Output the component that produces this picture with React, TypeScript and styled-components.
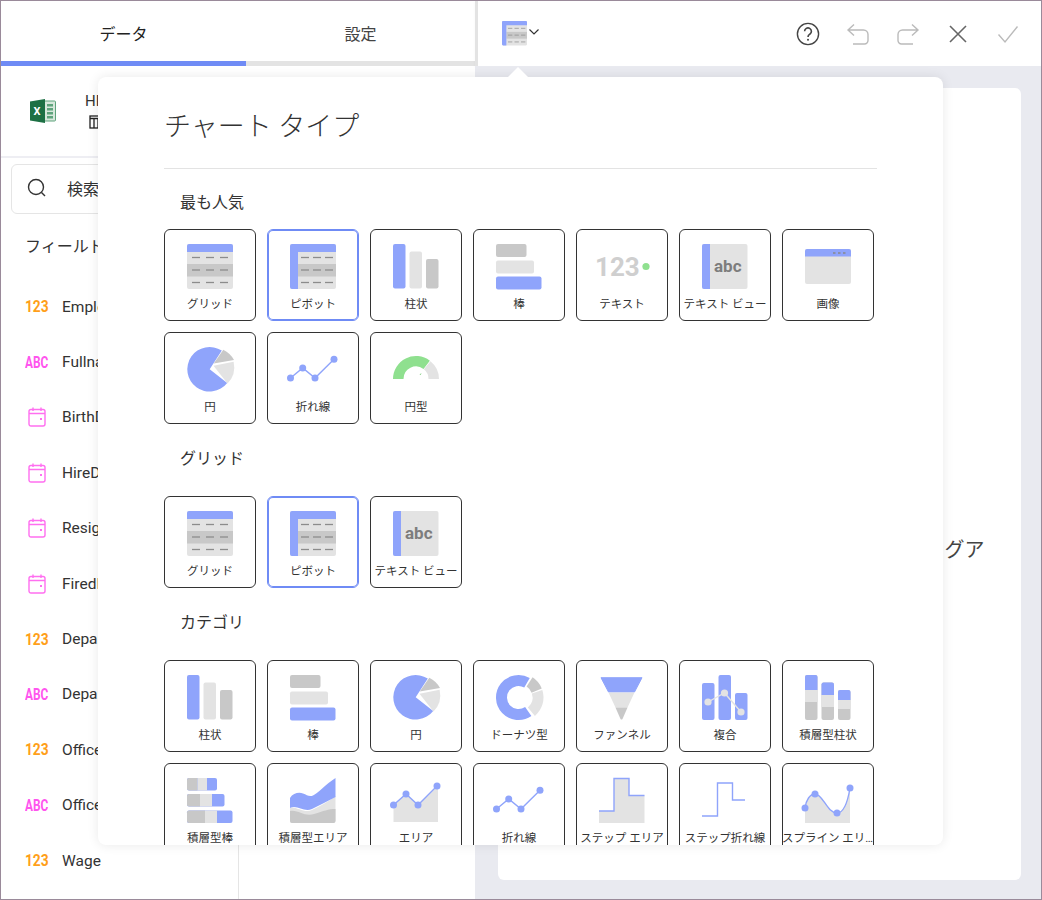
import React from "react";
import styled, { createGlobalStyle } from "styled-components";

const BLUE = "#8fa4fb";
const LIGHT = "#e3e3e3";
const MID = "#c8c8c8";
const DASH = "#8c8c8c";

const GlobalStyle = createGlobalStyle`
  html, body {
    margin: 0;
    padding: 0;
    background: #fff;
    font-family: Roboto, "Noto Sans CJK JP", sans-serif;
    color: #333;
  }
  * {
    box-sizing: border-box;
  }
`;

const polar = (cx: number, cy: number, r: number, deg: number) => {
  const rad = (deg * Math.PI) / 180;
  return `${(cx + r * Math.cos(rad)).toFixed(2)} ${(cy + r * Math.sin(rad)).toFixed(2)}`;
};

// ring segment, angles in degrees clockwise from 3 o'clock
const ring = (cx: number, cy: number, r1: number, r2: number, a0: number, a1: number) => {
  const large = a1 - a0 > 180 ? 1 : 0;
  return `M${polar(cx, cy, r2, a0)} A${r2} ${r2} 0 ${large} 1 ${polar(cx, cy, r2, a1)} L${polar(cx, cy, r1, a1)} A${r1} ${r1} 0 ${large} 0 ${polar(cx, cy, r1, a0)} Z`;
};

const Dashes = ({ x0, step }: { x0: number; step: number }) => (
  <g stroke={DASH} strokeWidth="1.3">
    {[13.5, 26, 38.5].map((y) =>
      [0, 1, 2].map((i) => (
        <line key={`${y}-${i}`} x1={x0 + i * step} x2={x0 + i * step + 8} y1={y} y2={y} />
      ))
    )}
  </g>
);

const GridIcon = () => (
  <>
    <rect x="0" y="0" width="46" height="45" rx="2" fill={LIGHT} />
    <rect x="0" y="20" width="46" height="12.5" fill={MID} />
    <path d="M0 8V2a2 2 0 0 1 2-2h42a2 2 0 0 1 2 2v6z" fill={BLUE} />
    <Dashes x0={5} step={14} />
  </>
);

const PivotIcon = () => (
  <>
    <rect x="0" y="0" width="46" height="45" rx="2" fill={LIGHT} />
    <rect x="8" y="20" width="38" height="12.5" fill={MID} />
    <path d="M0 43V2a2 2 0 0 1 2-2h42a2 2 0 0 1 2 2v6H8v37H2a2 2 0 0 1-2-2z" fill={BLUE} />
    <Dashes x0={11} step={12} />
  </>
);

const ColumnIcon = () => (
  <>
    <rect x="0" y="0" width="12.5" height="44.5" rx="2" fill={BLUE} />
    <rect x="16.5" y="7.5" width="12.5" height="37" rx="2" fill={LIGHT} />
    <rect x="33" y="15" width="12.5" height="29.5" rx="2" fill={MID} />
  </>
);

const BarIcon = () => (
  <>
    <rect x="0" y="0" width="30.5" height="13" rx="2" fill={MID} />
    <rect x="0" y="16.5" width="38" height="13" rx="2" fill={LIGHT} />
    <rect x="0" y="32.5" width="45.5" height="13" rx="2" fill={BLUE} />
  </>
);

const NumberIcon = () => (
  <>
    <text x="-4" y="32" fontFamily="Roboto, sans-serif" fontWeight="700" fontSize="26" fill="#cfcfcf">
      123
    </text>
    <circle cx="47" cy="22.5" r="3.6" fill="#8fe08f" />
  </>
);

const TextViewIcon = () => (
  <>
    <rect x="0" y="0" width="45.5" height="45" rx="2" fill={LIGHT} />
    <path d="M2 0h6v45H2a2 2 0 0 1-2-2V2a2 2 0 0 1 2-2z" fill={BLUE} />
    <text x="12" y="28" fontFamily="Roboto, sans-serif" fontWeight="700" fontSize="17" fill="#7d7d7d">
      abc
    </text>
  </>
);

const ImageIcon = () => (
  <>
    <rect x="0" y="5" width="46" height="35" rx="2" fill={LIGHT} />
    <path d="M0 12.5V7a2 2 0 0 1 2-2h42a2 2 0 0 1 2 2v5.5z" fill={BLUE} />
    <g fill="#8a8fa8">
      <rect x="28" y="8" width="2.5" height="2" />
      <rect x="33" y="8" width="2.5" height="2" />
      <rect x="38" y="8" width="2.5" height="2" />
    </g>
  </>
);

const PieIcon = () => (
  <>
    <path d="M22.7 22.3 L34.8 3.6 A22.3 22.3 0 1 0 40.2 36 Z" fill={BLUE} />
    <path d="M26.7 16.6 L36.3 2.7 A24 24 0 0 1 47 13 Z" fill={MID} />
    <path d="M26.5 18.7 L46.6 14.7 A24 24 0 0 1 40.5 36.6 Z" fill={LIGHT} />
  </>
);

const LinePoints = ({ pts }: { pts: number[][] }) => (
  <>
    <polyline points={pts.map((p) => p.join(",")).join(" ")} fill="none" stroke={BLUE} strokeWidth="1.4" />
    {pts.map((p) => (
      <circle key={p.join()} cx={p[0]} cy={p[1]} r="3.5" fill={BLUE} />
    ))}
  </>
);

const LineIcon = () => (
  <LinePoints
    pts={[
      [0.5, 31],
      [12.7, 21],
      [25, 31],
      [44, 12.3],
    ]}
  />
);

const GaugeIcon = () => (
  <>
    <path d={ring(23, 32, 12.5, 23, 180, 307)} fill="#8fe08f" />
    <path d={ring(23, 32, 12.5, 23, 309, 360)} fill={LIGHT} />
    <path d="M26.5 27.5l2-1.5-.8 2z" fill="#7fcf7f" />
  </>
);

const DonutIcon = () => (
  <>
    <path d={ring(22.5, 22.5, 11.5, 22.5, 55, 300)} fill={BLUE} />
    <path d={ring(23.5, 22.5, 13, 24, 303, 338)} fill={MID} />
    <path d={ring(23.5, 22.5, 13, 24, 342, 410)} fill={LIGHT} />
  </>
);

const FunnelIcon = () => (
  <>
    <path d="M2 2.7H43L35.5 17H9.5z" fill={BLUE} stroke={BLUE} strokeLinejoin="round" />
    <path d="M9.5 17.5H35.5L28.5 32.5H16.5z" fill={LIGHT} />
    <path d="M16.5 32.5H28.5L23.5 44Q22.5 45 21.5 44z" fill={MID} />
  </>
);

const ComboIcon = () => (
  <>
    <rect x="0" y="8" width="12.5" height="37" rx="2" fill={BLUE} />
    <rect x="16.5" y="0" width="12.5" height="45" rx="2" fill={BLUE} />
    <rect x="33" y="18" width="12.5" height="27" rx="2" fill={BLUE} />
    <polyline points="6,27 22.5,18 39,37" fill="none" stroke={LIGHT} strokeWidth="1.4" />
    <circle cx="6" cy="27" r="3.6" fill={LIGHT} />
    <circle cx="22.5" cy="18" r="3.6" fill={LIGHT} />
    <circle cx="39" cy="37" r="3.6" fill={LIGHT} />
  </>
);

const StackedColumnIcon = () => {
  const cols = [
    { x: 0, a: 0, b: 15, c: 27 },
    { x: 16.5, a: 7.5, b: 20, c: 32 },
    { x: 33, a: 15, b: 25, c: 34 },
  ];
  return (
    <>
      {cols.map((c) => (
        <g key={c.x}>
          <rect x={c.x} y={c.a} width="12.5" height={45 - c.a} rx="2" fill={MID} />
          <path d={`M${c.x} ${c.b}V${c.a + 2}a2 2 0 0 1 2-2h8.5a2 2 0 0 1 2 2V${c.b}z`} fill={BLUE} />
          <rect x={c.x} y={c.b} width="12.5" height={c.c - c.b} fill={LIGHT} />
        </g>
      ))}
    </>
  );
};

const StackedBarIcon = () => {
  const rows = [
    { y: 0, m: 10.5, l: 20, e: 30 },
    { y: 16, m: 13, l: 25, e: 37.5 },
    { y: 32.5, m: 18, l: 30, e: 45.5 },
  ];
  return (
    <>
      {rows.map((r) => (
        <g key={r.y}>
          <rect x="0" y={r.y} width={r.e} height="12.5" rx="2" fill={BLUE} />
          <path d={`M${r.m} ${r.y}H2a2 2 0 0 0-2 2v8.5a2 2 0 0 0 2 2H${r.m}z`} fill={MID} />
          <rect x={r.m} y={r.y} width={r.l - r.m} height="12.5" fill={LIGHT} />
        </g>
      ))}
    </>
  );
};

const StackedAreaIcon = () => (
  <>
    <path d="M0 43V30C5 27 14 36 22 32S38 24 45.5 18V43a2 2 0 0 1-2 2H2a2 2 0 0 1-2-2z" fill={LIGHT} />
    <path d="M0 33C8 31 14 39 24 36S38 31 45.5 31V43a2 2 0 0 1-2 2H2a2 2 0 0 1-2-2z" fill={MID} />
    <path d="M0 30V20C3 15 9 14 13 15.5S19 19 23 17.5 36 6 45.5 0V19C38 23 30 27 22 31S7 26 0 30z" fill={BLUE} />
  </>
);

const AreaIcon = () => (
  <>
    <path d="M.5 27L13 16 25 27 45 8V44H.5z" fill={LIGHT} />
    <LinePoints
      pts={[
        [0.5, 27],
        [13, 16],
        [25, 27],
        [44, 8],
      ]}
    />
  </>
);

const StepAreaIcon = () => (
  <>
    <path d="M0 33H15V0H30V17.5H45.5V45H0z" fill={LIGHT} />
    <path d="M0 33H15V.5H30V17.5H45.5" fill="none" stroke={BLUE} strokeWidth="1.4" />
  </>
);

const StepLineIcon = () => (
  <path d="M0 38H15.5V5H30.5V22H43" fill="none" stroke={BLUE} strokeWidth="1.4" />
);

const SplineAreaIcon = () => (
  <>
    <path d="M0 30C1 22 5 16 10 16 18 16 22 35 32 35 39 35 43 22 45 10V45H0z" fill={LIGHT} />
    <path d="M0 30C1 22 5 16 10 16 18 16 22 35 32 35 39 35 43 22 45 10" fill="none" stroke={BLUE} strokeWidth="1.4" />
    <circle cx="0" cy="30" r="3.5" fill={BLUE} />
    <circle cx="10" cy="16" r="3.5" fill={BLUE} />
    <circle cx="32" cy="35" r="3.5" fill={BLUE} />
    <circle cx="45" cy="10" r="3.5" fill={BLUE} />
  </>
);

const chartIcons = {
  grid: GridIcon,
  pivot: PivotIcon,
  column: ColumnIcon,
  bar: BarIcon,
  number: NumberIcon,
  textView: TextViewIcon,
  image: ImageIcon,
  pie: PieIcon,
  line: LineIcon,
  gauge: GaugeIcon,
  donut: DonutIcon,
  funnel: FunnelIcon,
  combo: ComboIcon,
  stackedColumn: StackedColumnIcon,
  stackedBar: StackedBarIcon,
  stackedArea: StackedAreaIcon,
  area: AreaIcon,
  stepArea: StepAreaIcon,
  stepLine: StepLineIcon,
  splineArea: SplineAreaIcon,
};

type ChartId = keyof typeof chartIcons;
interface TileData {
  id: ChartId;
  label: string;
  selected?: boolean;
}

const sections: { title: string; first?: boolean; tiles: TileData[] }[] = [
  {
    title: "最も人気",
    first: true,
    tiles: [
      { id: "grid", label: "グリッド" },
      { id: "pivot", label: "ピボット", selected: true },
      { id: "column", label: "柱状" },
      { id: "bar", label: "棒" },
      { id: "number", label: "テキスト" },
      { id: "textView", label: "テキスト ビュー" },
      { id: "image", label: "画像" },
      { id: "pie", label: "円" },
      { id: "line", label: "折れ線" },
      { id: "gauge", label: "円型" },
    ],
  },
  {
    title: "グリッド",
    tiles: [
      { id: "grid", label: "グリッド" },
      { id: "pivot", label: "ピボット", selected: true },
      { id: "textView", label: "テキスト ビュー" },
    ],
  },
  {
    title: "カテゴリ",
    tiles: [
      { id: "column", label: "柱状" },
      { id: "bar", label: "棒" },
      { id: "pie", label: "円" },
      { id: "donut", label: "ドーナツ型" },
      { id: "funnel", label: "ファンネル" },
      { id: "combo", label: "複合" },
      { id: "stackedColumn", label: "積層型柱状" },
      { id: "stackedBar", label: "積層型棒" },
      { id: "stackedArea", label: "積層型エリア" },
      { id: "area", label: "エリア" },
      { id: "line", label: "折れ線" },
      { id: "stepArea", label: "ステップ エリア" },
      { id: "stepLine", label: "ステップ折れ線" },
      { id: "splineArea", label: "スプライン エリア" },
    ],
  },
];

const fields: { kind: "num" | "abc" | "date"; name: string }[] = [
  { kind: "num", name: "EmployeeID" },
  { kind: "abc", name: "Fullname" },
  { kind: "date", name: "BirthDate" },
  { kind: "date", name: "HireDate" },
  { kind: "date", name: "ResignationDate" },
  { kind: "date", name: "FiredDate" },
  { kind: "num", name: "DepartmentID" },
  { kind: "abc", name: "Department" },
  { kind: "num", name: "OfficeID" },
  { kind: "abc", name: "Office" },
  { kind: "num", name: "Wage" },
];

const CalendarIcon = () => (
  <svg width="18" height="20" viewBox="0 0 18 20" fill="none" stroke="#ff6ff0" strokeWidth="1.4">
    <rect x="1" y="2.5" width="16" height="16.5" rx="2" />
    <path d="M1 6.5H17M5 .5V4M13 .5V4" />
    <rect x="12" y="11" width="2" height="2" fill="#ff6ff0" stroke="none" />
  </svg>
);

const ExcelIcon = () => (
  <svg width="26" height="24" viewBox="0 0 26 24">
    <path d="M9 2H24.5a1 1 0 0 1 1 1V21a1 1 0 0 1-1 1H9z" fill="#d7e8dc" stroke="#5fa37c" strokeWidth="1" />
    <path d="M17 5h6v2.5h-6zM17 9h6v2.5h-6zM17 13h6v2.5h-6zM17 17h6v2.5h-6z" fill="#5fa37c" />
    <path d="M0 2.5L15 0V24L0 21.5z" fill="#1d7044" />
    <text x="3.6" y="16" fontFamily="Roboto, sans-serif" fontWeight="700" fontSize="11" fill="#fff">
      X
    </text>
  </svg>
);

const TableIcon = () => (
  <svg width="14" height="14" viewBox="0 0 14 14" fill="none" stroke="#222" strokeWidth="1.3">
    <rect x="1" y="1" width="12" height="12" />
    <path d="M1 3.5H13M5 3.5V13M9 3.5V13" />
  </svg>
);

const SearchIcon = () => (
  <svg width="20" height="20" viewBox="0 0 20 20" fill="none" stroke="#333" strokeWidth="1.4">
    <circle cx="9" cy="9" r="7.5" />
    <path d="M14.5 14.5L18 18" />
  </svg>
);

const App = () => {
  return (
    <Frame>
      <GlobalStyle />
      <LeftPanel>
        <Tabs>
          <Tab $active>データ</Tab>
          <Tab>設定</Tab>
        </Tabs>
        <SourceRow>
          <ExcelIcon />
          <SourceText>
            <SourceName>HR Data.xlsx</SourceName>
            <SourceSheet>
              <TableIcon />
              <span>Sheet1</span>
            </SourceSheet>
          </SourceText>
        </SourceRow>
        <FieldColumn>
          <SearchBox>
            <SearchIcon />
            <span>検索</span>
          </SearchBox>
          <FieldHeader>フィールド</FieldHeader>
          {fields.map((f) => (
            <FieldRow key={f.name}>
              <FieldType $kind={f.kind}>
                {f.kind === "date" ? <CalendarIcon /> : <TypeTag $kind={f.kind}>{f.kind === "num" ? "123" : "ABC"}</TypeTag>}
              </FieldType>
              <FieldName>{f.name}</FieldName>
            </FieldRow>
          ))}
        </FieldColumn>
      </LeftPanel>

      <RightPanel>
        <Toolbar>
          <TypeButton>
            <svg width="25" height="25" viewBox="0 0 46 46">
              <PivotIcon />
            </svg>
            <svg width="12" height="8" viewBox="0 0 12 8" fill="none" stroke="#333" strokeWidth="1.2">
              <path d="M1.5 1.5L6 6l4.5-4.5" />
            </svg>
          </TypeButton>
          <ToolbarActions>
            <svg width="24" height="24" viewBox="0 0 24 24" fill="none" stroke="#444" strokeWidth="1.4">
              <circle cx="12" cy="12" r="10.6" />
              <path d="M8.6 9.3a3.4 3.4 0 1 1 5.2 2.9c-1.2.8-1.8 1.4-1.8 2.8" strokeWidth="1.6" />
              <circle cx="12" cy="17.8" r="1" fill="#444" stroke="none" />
            </svg>
            <svg width="24" height="24" viewBox="0 0 24 24" fill="none" stroke="#bbb" strokeWidth="1.4">
              <path d="M8 2.5L2 8l6 5.5M2 8h15.5a4.5 4.5 0 0 1 4.5 4.5v6a3.5 3.5 0 0 1-3.5 3.5H7" />
            </svg>
            <svg width="24" height="24" viewBox="0 0 24 24" fill="none" stroke="#bbb" strokeWidth="1.4">
              <path d="M16 2.5L22 8l-6 5.5M22 8H6.500a4.500 4.500 0 0 0-4.500 4.500v6a3.500 3.500 0 0 0 3.500 3.500H17" />
            </svg>
            <svg width="24" height="24" viewBox="0 0 24 24" fill="none" stroke="#666" strokeWidth="1.6">
              <path d="M4 4l16 16M20 4L4 20" />
            </svg>
            <svg width="24" height="24" viewBox="0 0 24 24" fill="none" stroke="#bbb" strokeWidth="1.4">
              <path d="M2.500 12.500L9 20 21.500 4.500" />
            </svg>
          </ToolbarActions>
        </Toolbar>
        <Workspace>
          <Canvas>
            <CanvasHint>ビジュアライゼーションを作成するにドラッグア</CanvasHint>
          </Canvas>
        </Workspace>
      </RightPanel>

      <Popover>
        <PopoverBody>
          <PopoverTitle>チャート タイプ</PopoverTitle>
          {sections.map((s) => (
            <section key={s.title}>
              <SectionTitle $first={s.first}>{s.title}</SectionTitle>
              <TileGrid>
                {s.tiles.map((t) => {
                  const Icon = chartIcons[t.id];
                  return (
                    <Tile key={t.id} $selected={t.selected}>
                      <TileIcon viewBox="0 0 46 46">
                        <Icon />
                      </TileIcon>
                      <TileLabel>{t.label}</TileLabel>
                    </Tile>
                  );
                })}
              </TileGrid>
            </section>
          ))}
        </PopoverBody>
      </Popover>
    </Frame>
  );
};

export default App;

const Frame = styled.div`
  position: relative;
  display: flex;
  width: 1042px;
  height: 900px;
  overflow: hidden;
  border: 1px solid #9a8a9a;
  background: #fff;
`;

const LeftPanel = styled.div`
  display: flex;
  flex-direction: column;
  width: 474px;
  flex-shrink: 0;
`;

const Tabs = styled.div`
  display: flex;
  height: 65px;
  flex-shrink: 0;
`;

const Tab = styled.div<{ $active?: boolean }>`
  flex: ${(p) => (p.$active ? "0 0 245px" : "1")};
  display: flex;
  align-items: center;
  justify-content: center;
  padding-top: 3px;
  font-size: 16px;
  color: ${(p) => (p.$active ? "#222" : "#444")};
  border-bottom: 5px solid ${(p) => (p.$active ? "#6f8bf5" : "#e3e3e3")};
`;

const SourceRow = styled.div`
  display: flex;
  align-items: center;
  gap: 29px;
  height: 92px;
  flex-shrink: 0;
  padding-left: 29px;
  border-bottom: 2px solid #eeeef3;
`;

const SourceText = styled.div`
  display: flex;
  flex-direction: column;
  gap: 2px;
`;

const SourceName = styled.div`
  font-size: 15px;
  line-height: 19px;
  color: #333;
`;

const SourceSheet = styled.div`
  display: flex;
  align-items: center;
  gap: 6px;
  padding-left: 4px;
  font-size: 13px;
  line-height: 17px;
`;

const FieldColumn = styled.div`
  width: 238px;
  flex: 1;
  border-right: 1px solid #e5e5e5;
`;

const SearchBox = styled.div`
  display: flex;
  align-items: center;
  gap: 20px;
  height: 50px;
  margin: 6px 10px 0 10px;
  padding: 0 0 2px 15px;
  font-size: 16px;
  color: #333;
  border: 1px solid #e5e5e5;
  border-radius: 6px;
`;

const FieldHeader = styled.div`
  display: flex;
  align-items: center;
  height: 65px;
  padding: 0 0 4px 24px;
  font-size: 16px;
  color: #333;
`;

const FieldRow = styled.div`
  display: flex;
  align-items: center;
  gap: 14px;
  height: 55.4px;
  padding-left: 24px;
`;

const FieldType = styled.div<{ $kind: "num" | "abc" | "date" }>`
  display: flex;
  justify-content: center;
  width: 23px;
  font-weight: 700;
  font-size: 16px;
  color: ${(p) => (p.$kind === "num" ? "#ff9f1a" : "#ff55ee")};
`;

const TypeTag = styled.span<{ $kind: "num" | "abc" | "date" }>`
  display: inline-block;
  transform: scale(${(p) => (p.$kind === "num" ? "0.86, 1" : "0.74, 1.05")});
`;

const FieldName = styled.div`
  font-size: 15.5px;
  color: #333;
  white-space: nowrap;
`;

const RightPanel = styled.div`
  flex: 1;
  display: flex;
  flex-direction: column;
  min-width: 0;
`;

const Toolbar = styled.div`
  display: flex;
  align-items: center;
  justify-content: space-between;
  height: 65px;
  flex-shrink: 0;
  padding: 0 21px 0 24px;
  border-left: 3px solid #e3e3e3;
  box-shadow: 0 1px 3px rgba(0, 0, 0, 0.04);
`;

const TypeButton = styled.div`
  display: flex;
  align-items: center;
  gap: 1px;
  svg:last-child {
    margin-bottom: 3px;
  }
`;

const ToolbarActions = styled.div`
  display: flex;
  align-items: center;
  gap: 26px;
`;

const Workspace = styled.div`
  flex: 1;
  display: flex;
  padding: 22px 20px 19px 23px;
  background: #e9eaf0;
`;

const Canvas = styled.div`
  flex: 1;
  display: flex;
  align-items: center;
  justify-content: center;
  padding: 128px 0 0 12px;
  background: #fff;
  border-radius: 6px;
`;

const CanvasHint = styled.div`
  font-size: 20px;
  color: #444;
  white-space: nowrap;
`;

const Popover = styled.div`
  position: absolute;
  left: 97px;
  top: 76px;
  width: 845px;
  height: 768px;
  background: #fff;
  border-radius: 8px;
  box-shadow: 0 0 12px rgba(0, 0, 0, 0.09);

  &::before {
    content: "";
    position: absolute;
    left: 410px;
    top: -10px;
    border-left: 10px solid transparent;
    border-right: 10px solid transparent;
    border-bottom: 10px solid #fff;
  }
`;

const PopoverBody = styled.div`
  height: 100%;
  padding: 0 66px;
  overflow: hidden;
  border-radius: 8px;
`;

const PopoverTitle = styled.h2`
  display: flex;
  align-items: center;
  height: 92px;
  margin: 0;
  padding-top: 4px;
  font-size: 27px;
  font-weight: 300;
  color: #333;
  border-bottom: 1px solid #e3e3e3;
`;

const SectionTitle = styled.h3<{ $first?: boolean }>`
  margin: ${(p) => (p.$first ? "23px 0 15px" : "24px 0 26px")};
  padding-left: 16px;
  font-size: 16px;
  line-height: 22px;
  font-weight: 400;
  color: #333;
`;

const TileGrid = styled.div`
  display: grid;
  grid-template-columns: repeat(7, 92px);
  grid-auto-rows: 92px;
  gap: 11px;
`;

const Tile = styled.div<{ $selected?: boolean }>`
  display: flex;
  flex-direction: column;
  align-items: center;
  padding-top: 14px;
  border: 1px solid ${(p) => (p.$selected ? "#6f8bf5" : "#333")};
  border-radius: 6px;
  box-shadow: ${(p) => (p.$selected ? "inset 0 0 0 1px #6f8bf5" : "none")};
`;

const TileIcon = styled.svg`
  width: 46px;
  height: 46px;
  flex-shrink: 0;
  overflow: visible;
`;

const TileLabel = styled.div`
  width: 92px;
  margin-top: 5.5px;
  overflow: hidden;
  font-size: 11.5px;
  line-height: 16px;
  color: #333;
  text-align: center;
  white-space: nowrap;
  text-overflow: ellipsis;
`;
